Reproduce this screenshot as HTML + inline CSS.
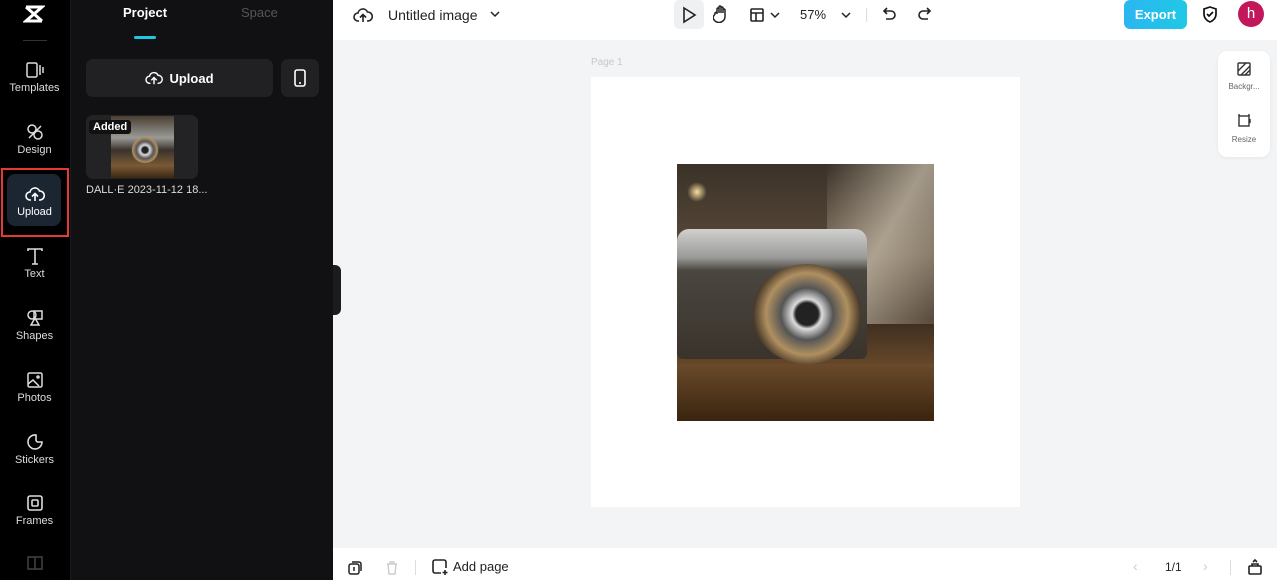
<!DOCTYPE html>
<html><head><meta charset="utf-8"><style>
*{margin:0;padding:0;box-sizing:border-box}
body{width:1277px;height:580px;overflow:hidden;background:#f3f4f5;font-family:"Liberation Sans",sans-serif;position:relative}
.abs{position:absolute}
#rail{left:0;top:0;width:70px;height:580px;background:#000}
#panel{left:70px;top:0;width:263px;height:580px;background:#111113;border-left:1px solid #1c1c1e}
.ri{position:absolute;left:0;width:69px;text-align:center;color:#ddd;font-size:11px}
.ri svg{display:block;margin:0 auto 3px}
#top{left:333px;top:0;width:944px;height:40px;background:#fff}
#bot{left:333px;top:548px;width:944px;height:32px;background:#fff}
</style></head><body>
<div id="rail" class="abs">
 <svg class="abs" style="left:23px;top:4px" width="22" height="20" viewBox="0 0 22 20"><path d="M3 3h16L3 17h16M3 3l16 14" stroke="#fff" stroke-width="3" fill="none"/></svg>
 <div class="abs" style="left:23px;top:40px;width:24px;height:1px;background:#333"></div>
 <div class="ri" style="top:61px"><svg width="20" height="18" viewBox="0 0 20 18" fill="none" stroke="#ddd" stroke-width="1.5"><rect x="2" y="2" width="10" height="14" rx="1.5"/><path d="M15 4v10M18 6v6"/></svg>Templates</div>
 <div class="ri" style="top:123px"><svg width="20" height="18" viewBox="0 0 20 18" fill="none" stroke="#ddd" stroke-width="1.5"><circle cx="7" cy="6" r="4"/><circle cx="13" cy="12" r="4"/><path d="M4 15l12-12"/></svg>Design</div>
 <div class="abs" style="left:7px;top:174px;width:54px;height:52px;background:#1c2633;border-radius:8px"></div>
 <div class="abs" style="left:1px;top:168px;width:68px;height:69px;border:2px solid #e53935"></div>
 <div class="ri" style="top:185px;color:#fff"><svg width="20" height="18" viewBox="0 0 20 18" fill="none" stroke="#fff" stroke-width="1.6"><path d="M6 15H5a4 4 0 010-8 5 5 0 019.5-1A4 4 0 0115 15h-1M10 16V9M7 11.5l3-3 3 3"/></svg>Upload</div>
 <div class="ri" style="top:247px"><svg width="20" height="18" viewBox="0 0 20 18" fill="none" stroke="#ddd" stroke-width="1.6"><path d="M3 4V2h14v2M10 2v15M7 17h6"/></svg>Text</div>
 <div class="ri" style="top:309px"><svg width="20" height="18" viewBox="0 0 20 18" fill="none" stroke="#ddd" stroke-width="1.5"><circle cx="7" cy="6" r="4"/><rect x="9" y="2" width="8" height="8"/><path d="M10 9l-4 7h8z"/></svg>Shapes</div>
 <div class="ri" style="top:371px"><svg width="20" height="18" viewBox="0 0 20 18" fill="none" stroke="#ddd" stroke-width="1.5"><rect x="3" y="2" width="14" height="14" rx="1.5"/><path d="M3 13l5-4 6 6"/><circle cx="13" cy="6" r="1"/></svg>Photos</div>
 <div class="ri" style="top:433px"><svg width="20" height="18" viewBox="0 0 20 18" fill="none" stroke="#ddd" stroke-width="1.6"><path d="M11 2a7 7 0 106 7h-4a2 2 0 01-2-2z"/></svg>Stickers</div>
 <div class="ri" style="top:494px"><svg width="20" height="18" viewBox="0 0 20 18" fill="none" stroke="#ddd" stroke-width="1.6"><rect x="3" y="2" width="14" height="14" rx="2"/><rect x="7" y="6" width="6" height="6" rx="1"/></svg>Frames</div>
 <div class="ri" style="top:554px;opacity:.3"><svg width="20" height="16" viewBox="0 0 20 16" fill="none" stroke="#ddd" stroke-width="1.5"><rect x="3" y="3" width="14" height="12"/><path d="M10 3v12"/></svg></div>
</div>
<div id="panel" class="abs">
 <div class="abs" style="left:52px;top:5px;color:#fff;font-weight:bold;font-size:13px">Project</div>
 <div class="abs" style="left:170px;top:5px;color:#555;font-size:13px">Space</div>
 <div class="abs" style="left:63px;top:36px;width:22px;height:3px;background:#1ec8e0;border-radius:2px"></div>
 <div class="abs" style="left:15px;top:59px;width:187px;height:38px;background:#212124;border-radius:7px;color:#fff;font-weight:bold;font-size:13px;display:flex;align-items:center;justify-content:center;gap:6px"><svg width="18" height="16" viewBox="0 0 20 18" fill="none" stroke="#fff" stroke-width="1.6"><path d="M6 15H5a4 4 0 010-8 5 5 0 019.5-1A4 4 0 0115 15h-1M10 16V9M7 11.5l3-3 3 3"/></svg>Upload</div>
 <div class="abs" style="left:210px;top:59px;width:38px;height:38px;background:#212124;border-radius:7px"><svg class="abs" style="left:12px;top:10px" width="14" height="18" viewBox="0 0 14 18" fill="none" stroke="#fff" stroke-width="1.6"><rect x="2" y="1" width="10" height="16" rx="2"/><path d="M6 14h2"/></svg></div>
 <div class="abs" style="left:15px;top:115px;width:112px;height:64px;background:#232326;border-radius:7px;overflow:hidden">
  <div class="abs" style="left:25px;top:1px;width:63px;height:62px;background:linear-gradient(180deg,#4a3e32 0%,#9a9a96 35%,#3a332c 55%,#7a5a34 80%,#3a2814 100%)"></div>
  <div class="abs" style="left:45px;top:22px;width:28px;height:26px;border-radius:50%;background:radial-gradient(circle,#222 0 15%,#ddd 25%,#555 45%,#b09060 65%,rgba(0,0,0,0) 72%)"></div>
  <div class="abs" style="left:3px;top:5px;background:#111;color:#fff;font-weight:bold;font-size:11px;padding:1px 4px;border-radius:3px">Added</div>
 </div>
 <div class="abs" style="left:15px;top:184px;color:#ddd;font-size:11px">DALL·E 2023-11-12 18...</div>
</div>
<div class="abs" style="left:333px;top:265px;width:8px;height:50px;background:#1c1c1e;border-radius:0 6px 6px 0"></div>
<div id="top" class="abs">
 <svg class="abs" style="left:20px;top:6px" width="20" height="18" viewBox="0 0 20 18" fill="none" stroke="#222" stroke-width="1.6"><path d="M6 15H5a4 4 0 010-8 5 5 0 019.5-1A4 4 0 0115 15h-1M10 16V9M7 11.5l3-3 3 3"/></svg>
 <div class="abs" style="left:55px;top:7px;font-size:14px;color:#222">Untitled image</div>
 <svg class="abs" style="left:157px;top:10px" width="10" height="8" viewBox="0 0 10 8" fill="none" stroke="#222" stroke-width="1.5"><path d="M1 2l4 4 4-4"/></svg>
 <div class="abs" style="left:341px;top:0;width:30px;height:29px;background:#eef0f2;border-radius:5px"></div>
 <svg class="abs" style="left:348px;top:6px" width="16" height="18" viewBox="0 0 16 18" fill="none" stroke="#222" stroke-width="1.6"><path d="M3 2l11 7-11 7z"/></svg>
 <svg class="abs" style="left:380px;top:5px" width="16" height="18" viewBox="0 0 16 18" fill="none" stroke="#222" stroke-width="1.5"><path d="M4 9V4a1 1 0 012 0v4V2a1 1 0 012 0v6V3a1 1 0 012 0v5V5a1 1 0 012 0v6a6 6 0 01-12 1L2 9a1 1 0 012-1z"/></svg>
 <svg class="abs" style="left:416px;top:7px" width="16" height="16" viewBox="0 0 16 16" fill="none" stroke="#222" stroke-width="1.6"><rect x="2" y="2" width="12" height="12" rx="1"/><path d="M2 6h12M7 6v8"/></svg>
 <svg class="abs" style="left:437px;top:11px" width="10" height="8" viewBox="0 0 10 8" fill="none" stroke="#222" stroke-width="1.5"><path d="M1 2l4 4 4-4"/></svg>
 <div class="abs" style="left:467px;top:7px;font-size:13px;color:#222">57%</div>
 <svg class="abs" style="left:508px;top:11px" width="10" height="8" viewBox="0 0 10 8" fill="none" stroke="#222" stroke-width="1.5"><path d="M1 2l4 4 4-4"/></svg>
 <div class="abs" style="left:533px;top:8px;width:1px;height:14px;background:#ddd"></div>
 <svg class="abs" style="left:549px;top:6px" width="16" height="18" viewBox="0 0 16 18" fill="none" stroke="#222" stroke-width="1.6"><path d="M5 2L2 5l3 3M2 5h7a4 4 0 010 8H4"/></svg>
 <svg class="abs" style="left:583px;top:6px" width="16" height="18" viewBox="0 0 16 18" fill="none" stroke="#222" stroke-width="1.6"><path d="M11 2l3 3-3 3M14 5H7a4 4 0 000 8h5"/></svg>
 <div class="abs" style="left:791px;top:0;width:63px;height:29px;background:linear-gradient(90deg,#2bb6f0,#20c8e6);border-radius:6px;color:#fff;font-weight:bold;font-size:13px;text-align:center;line-height:29px">Export</div>
 <svg class="abs" style="left:868px;top:5px" width="18" height="19" viewBox="0 0 18 19" fill="none" stroke="#111" stroke-width="1.7"><path d="M9 2l6 2v5c0 4-3 7-6 8-3-1-6-4-6-8V4z"/><path d="M6 9l2 2 4-4"/></svg>
 <div class="abs" style="left:905px;top:1px;width:26px;height:26px;border-radius:50%;background:#c2185b;color:#fff;font-size:15px;text-align:center;line-height:25px">h</div>
</div>
<div class="abs" style="left:591px;top:57px;font-size:10px;color:#c5c8cc">Page 1</div>
<div class="abs" style="left:591px;top:77px;width:429px;height:430px;background:#fff"></div>
<div class="abs" style="left:677px;top:164px;width:257px;height:257px;overflow:hidden;background:linear-gradient(180deg,#3a3228 0%,#5a4a3a 35%,#3a2c20 60%,#6a4a2a 80%,#2a1a10 100%)">
 <div class="abs" style="left:150px;top:0;width:107px;height:160px;background:linear-gradient(120deg,rgba(230,220,200,0) 0%,rgba(230,220,200,.6) 50%,rgba(200,190,170,.2) 100%)"></div>
 <div class="abs" style="left:0;top:65px;width:190px;height:130px;border-radius:12px 12px 6px 6px;background:linear-gradient(180deg,#d0d0ce 0%,#9a9a98 22%,#4a4640 32%,#3a332c 100%)"></div>
 <div class="abs" style="left:75px;top:100px;width:110px;height:100px;border-radius:50%;background:radial-gradient(circle,#222 0 15%,#ddd 20%,#555 35%,#b09060 55%,#4a3a2a 72%,rgba(0,0,0,0) 74%)"></div>
 <div class="abs" style="left:0;top:200px;width:257px;height:57px;background:linear-gradient(180deg,#6a4a2a,#3a2410)"></div>
 <div class="abs" style="left:10px;top:18px;width:20px;height:20px;border-radius:50%;background:radial-gradient(#f8e0a0,rgba(0,0,0,0) 70%)"></div>
</div>
<div class="abs" style="left:1218px;top:51px;width:52px;height:106px;background:#fff;border-radius:9px;box-shadow:0 1px 4px rgba(0,0,0,.06)">
 <svg class="abs" style="left:18px;top:10px" width="16" height="16" viewBox="0 0 16 16" fill="none" stroke="#333" stroke-width="1.4"><rect x="2" y="2" width="12" height="12" rx="1"/><path d="M2 10l8-8M5 14l9-9M9 14l5-5"/></svg>
 <div class="abs" style="left:0;top:31px;width:52px;text-align:center;font-size:8px;color:#666">Backgr...</div>
 <svg class="abs" style="left:18px;top:62px" width="16" height="16" viewBox="0 0 16 16" fill="none" stroke="#333" stroke-width="1.4"><rect x="3" y="3" width="10" height="10"/><path d="M3 1v2M13 1v2M14 6v4"/></svg>
 <div class="abs" style="left:0;top:84px;width:52px;text-align:center;font-size:8px;color:#666">Resize</div>
</div>
<div id="bot" class="abs">
 <svg class="abs" style="left:14px;top:12px" width="16" height="16" viewBox="0 0 16 16" fill="none" stroke="#222" stroke-width="1.5"><rect x="2" y="4" width="10" height="10" rx="2"/><path d="M5 2h7a2 2 0 012 2v7"/><path d="M7 7v4"/></svg>
 <svg class="abs" style="left:52px;top:12px" width="14" height="16" viewBox="0 0 14 16" fill="none" stroke="#ccc" stroke-width="1.4"><path d="M2 4h10M3 4l1 10h6l1-10M5 4V2h4v2"/></svg>
 <div class="abs" style="left:82px;top:12px;width:1px;height:15px;background:#ddd"></div>
 <svg class="abs" style="left:98px;top:10px" width="18" height="18" viewBox="0 0 18 18" fill="none" stroke="#222" stroke-width="1.6"><path d="M10 15H4a2 2 0 01-2-2V4a2 2 0 012-2h9a2 2 0 012 2v6M14 12v5M11.5 14.5h5"/></svg>
 <div class="abs" style="left:120px;top:11px;font-size:13px;color:#222">Add page</div>
 <div class="abs" style="left:800px;top:10px;font-size:14px;color:#ccc">‹</div>
 <div class="abs" style="left:832px;top:12px;font-size:12px;color:#222">1/1</div>
 <div class="abs" style="left:870px;top:10px;font-size:14px;color:#ccc">›</div>
 <div class="abs" style="left:897px;top:12px;width:1px;height:15px;background:#ddd"></div>
 <svg class="abs" style="left:914px;top:10px" width="16" height="18" viewBox="0 0 16 18" fill="none" stroke="#222" stroke-width="1.6"><rect x="2" y="8" width="12" height="8" rx="1"/><path d="M5 8V6h6v2M6 4l2-2 2 2"/></svg>
</div>
</body></html>
